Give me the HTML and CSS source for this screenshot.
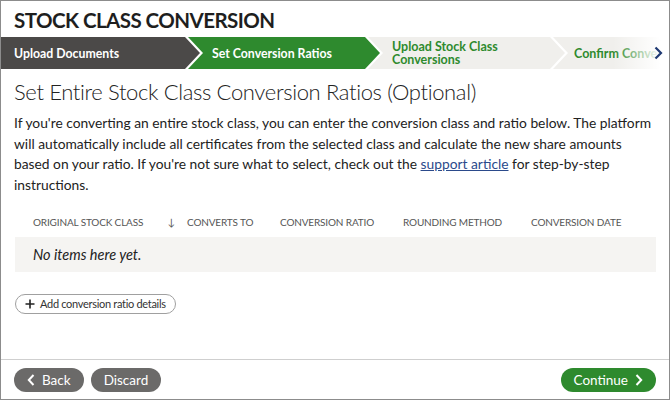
FILE: index.html
```html
<!DOCTYPE html>
<html lang="en">

<head>
  <meta charset="UTF-8">
  <meta name="viewport" content="width=device-width, initial-scale=1.0">
  <title>Stock Class Conversion</title>
  <link rel="stylesheet" href="styles.css">
</head>

<body>
  <div class="page">
    <h1 class="title">STOCK CLASS CONVERSION</h1>

    <nav class="steps">
      <div class="step step-done step-first">Upload Documents</div>
      <div class="step step-active">Set Conversion Ratios</div>
      <div class="step step-todo">Upload Stock Class<br>Conversions</div>
      <div class="step step-todo step-last">Confirm Conversions</div>
      <div class="steps-fade">
        <svg width="9" height="14" viewBox="0 0 9 14"><path d="M1.5 1.5 L7 7 L1.5 12.5" fill="none" stroke="#1f3a73" stroke-width="2.2"/></svg>
      </div>
    </nav>

    <main class="content">
      <h2 class="heading">Set Entire Stock Class Conversion Ratios (Optional)</h2>
      <p class="intro">If you're converting an entire stock class, you can enter the conversion class and ratio below. The platform will automatically include all certificates from the selected class and calculate the new share amounts based on your ratio. If you're not sure what to select, check out the <a href="#">support article</a> for step-by-step instructions.</p>

      <div class="table">
        <div class="table-head">
          <div class="col col-first"><span>ORIGINAL STOCK CLASS</span><span class="sort">&#8595;</span></div>
          <div class="col">CONVERTS TO</div>
          <div class="col">CONVERSION RATIO</div>
          <div class="col">ROUNDING METHOD</div>
          <div class="col">CONVERSION DATE</div>
        </div>
        <div class="table-empty">No items here yet.</div>
      </div>

      <button class="add-btn">
        <svg width="10" height="10" viewBox="0 0 10 10"><path d="M5 0.5 V9.5 M0.5 5 H9.5" stroke="#222" stroke-width="1.6"/></svg>
        Add conversion ratio details
      </button>
    </main>

    <footer class="actions">
      <button class="btn btn-gray">
        <svg width="8" height="12" viewBox="0 0 8 12"><path d="M6.5 1 L1.8 6 L6.5 11" fill="none" stroke="#fff" stroke-width="2"/></svg>
        Back
      </button>
      <button class="btn btn-gray">Discard</button>
      <button class="btn btn-green">
        Continue
        <svg width="8" height="12" viewBox="0 0 8 12"><path d="M1.5 1 L6.2 6 L1.5 11" fill="none" stroke="#fff" stroke-width="2"/></svg>
      </button>
    </footer>
  </div>
</body>

</html>
```

FILE: styles.css
```css
* {
  margin: 0;
  padding: 0;
  box-sizing: border-box;
  font-family: 'Lato', 'Liberation Sans', sans-serif;
}

body {
  background: #fff;
  color: #222;
}

.page {
  width: 670px;
  height: 400px;
  border: 1px solid #8c8c8c;
  display: flex;
  flex-direction: column;
  overflow: hidden;
}

.title {
  font-size: 20.5px;
  line-height: 26px;
  font-weight: 700;
  letter-spacing: -0.55px;
  padding: 6px 13px 0;
  margin-bottom: 4px;
  color: #1e1e1e;
}

/* wizard steps */
.steps {
  position: relative;
  display: flex;
  height: 32px;
  background: #fff;
}

.step {
  height: 32px;
  display: flex;
  align-items: center;
  font-size: 12.3px;
  line-height: 13px;
  font-weight: 700;
  padding-left: 24px;
  margin-left: -12px;
  flex-shrink: 0;
  clip-path: polygon(0 0, calc(100% - 15px) 0, 100% 50%, calc(100% - 15px) 100%, 0 100%, 15px 50%);
}

.step-first {
  margin-left: 0;
  padding-left: 13px;
  width: 199px;
  clip-path: polygon(0 0, calc(100% - 15px) 0, 100% 50%, calc(100% - 15px) 100%, 0 100%);
}

.step-done {
  background: #4b4948;
  color: #fff;
}

.step-active {
  width: 192px;
  background: #2e8a2e;
  color: #fff;
}

.step-todo {
  width: 197px;
  background: #f0efec;
  color: #2e8a2e;
  font-size: 12.5px;
}

.step-last {
  width: 150px;
  padding-left: 21px;
  font-size: 12.5px;
}

.steps-fade {
  position: absolute;
  top: 0;
  right: 0;
  width: 56px;
  height: 32px;
  background: linear-gradient(to right, rgba(255, 255, 255, 0), #fff 85%);
  display: flex;
  align-items: center;
  justify-content: flex-end;
  padding-right: 6px;
}

/* main */
.content {
  flex: 1;
  padding: 0 13px;
}

.heading {
  font-size: 22px;
  line-height: 28px;
  font-weight: 300;
  letter-spacing: -0.36px;
  margin-top: 9px;
  color: #222;
}

.intro {
  font-size: 13.8px;
  line-height: 20.7px;
  margin-top: 7px;
  color: #222;
}

.intro a {
  color: #2b4a8b;
}

.table {
  margin-top: 11px;
  margin-left: 1px;
}

.table-head {
  display: grid;
  grid-template-columns: 172px 93px 123px 128px 1fr;
  height: 30px;
  align-items: center;
  font-size: 10px;
  letter-spacing: -0.15px;
  color: #555;
}

.col-first {
  display: flex;
  justify-content: space-between;
  padding-left: 18px;
  padding-right: 12px;
}

.sort {
  font-size: 10px;
}

.table-empty {
  height: 35px;
  background: #f5f4f2;
  display: flex;
  align-items: center;
  padding-left: 18px;
  font-size: 14.5px;
  font-style: italic;
  color: #222;
}

.add-btn {
  margin-top: 22px;
  margin-left: 1px;
  height: 20px;
  padding: 0 9px 0 9px;
  border: 1px solid #a0a0a0;
  border-radius: 10px;
  background: #fff;
  display: flex;
  align-items: center;
  gap: 5px;
  font-size: 11px;
  letter-spacing: -0.3px;
  color: #333;
}

/* footer */
.actions {
  border-top: 1px solid #cfcfcf;
  padding: 8px 13px 7px;
  display: flex;
  gap: 7px;
}

.btn {
  height: 24px;
  border: none;
  border-radius: 12px;
  color: #fff;
  font-size: 13.5px;
  display: flex;
  align-items: center;
  gap: 7px;
  padding: 0 13px;
}

.btn-gray {
  background: #6b6a69;
}

.btn-green {
  background: #2e8a2e;
  margin-left: auto;
}
```
